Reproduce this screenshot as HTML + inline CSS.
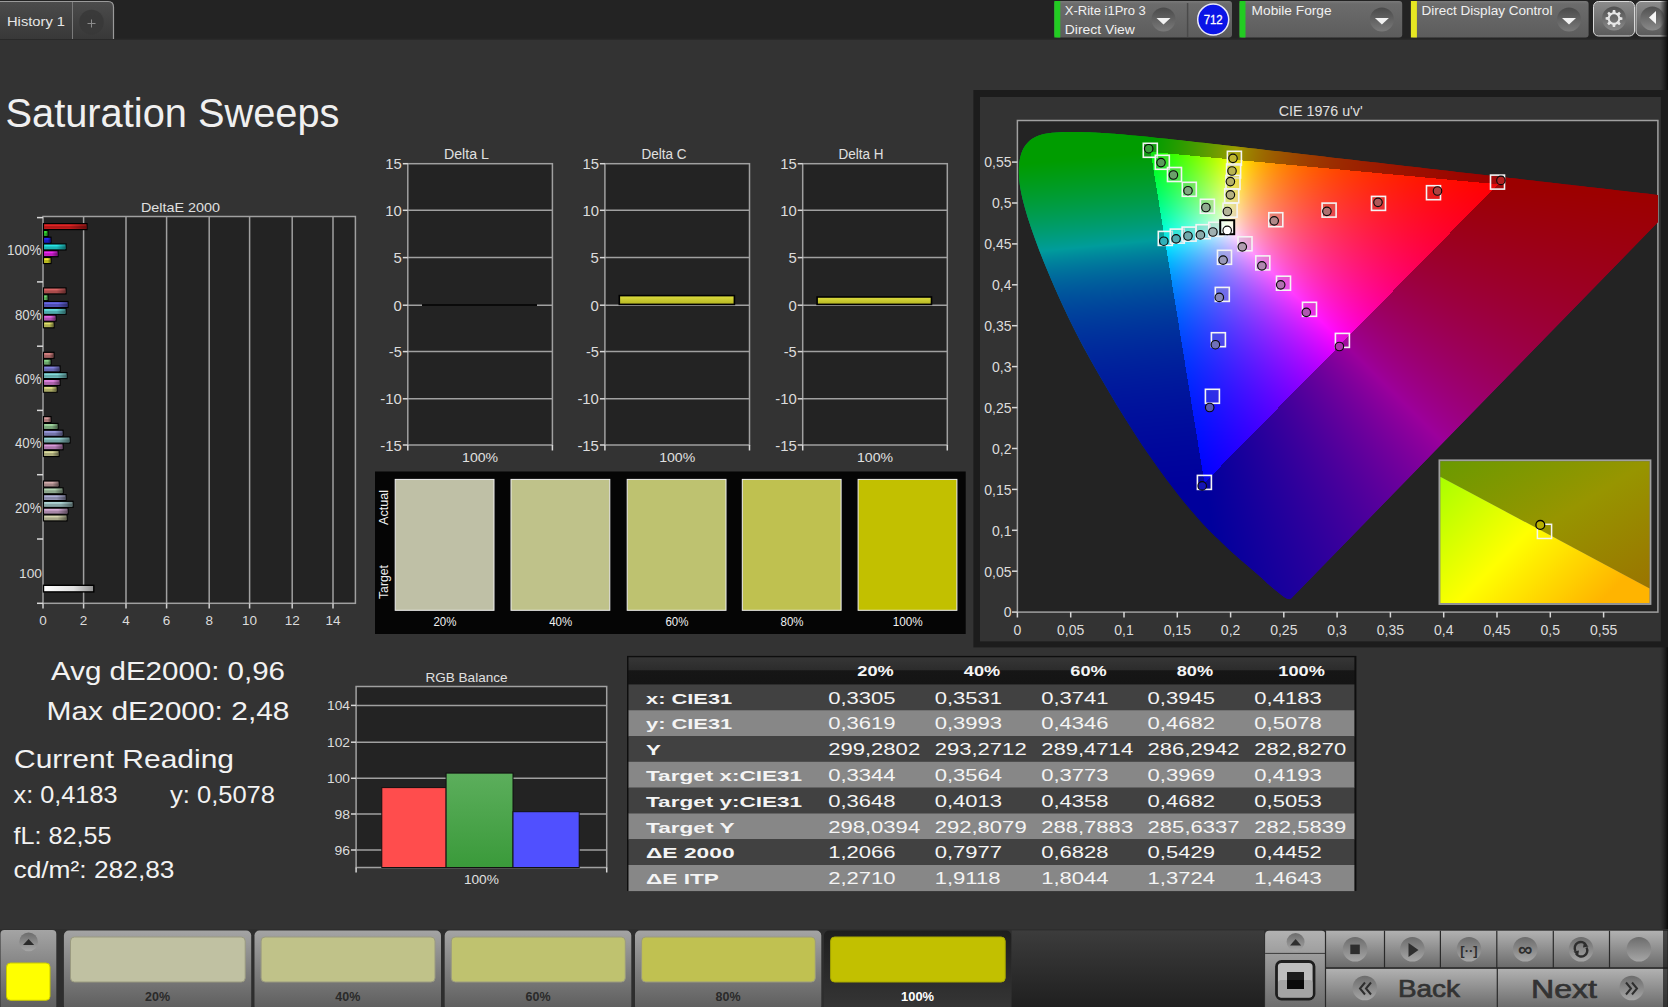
<!DOCTYPE html>
<html><head><meta charset="utf-8"><title>Saturation Sweeps</title>
<style>
html,body{margin:0;padding:0;width:1668px;height:1007px;overflow:hidden;background:#333333;}
body{position:relative;font-family:"Liberation Sans",sans-serif;}
svg text{font-family:"Liberation Sans",sans-serif;}
#cie{position:absolute;left:1018px;top:121px;width:640px;height:491px;}
#ov{position:absolute;left:0;top:0;}
#bg{position:absolute;left:0;top:0;}
</style></head><body>
<svg id="bg" width="1668" height="1007"><defs>
<linearGradient id="tabg" x1="0" y1="0" x2="0" y2="1"><stop offset="0" stop-color="#4c4c4c"/><stop offset="1" stop-color="#383838"/></linearGradient>
<linearGradient id="devg" x1="0" y1="0" x2="0" y2="1"><stop offset="0" stop-color="#7a7a7a"/><stop offset="0.08" stop-color="#6c6c6c"/><stop offset="1" stop-color="#5c5c5c"/></linearGradient>
<linearGradient id="btng" x1="0" y1="0" x2="0" y2="1"><stop offset="0" stop-color="#909090"/><stop offset="1" stop-color="#4e4e4e"/></linearGradient>
<linearGradient id="knob" x1="0" y1="0" x2="0" y2="1"><stop offset="0" stop-color="#4a4a4a"/><stop offset="1" stop-color="#7a7a7a"/></linearGradient>
<linearGradient id="knob2" x1="0" y1="0" x2="0" y2="1"><stop offset="0" stop-color="#6c6c6c"/><stop offset="1" stop-color="#a6a6a6"/></linearGradient>
<linearGradient id="tileg" x1="0" y1="0" x2="0" y2="1"><stop offset="0" stop-color="#a4a4a4"/><stop offset="0.55" stop-color="#7c7c7c"/><stop offset="1" stop-color="#5c5c5c"/></linearGradient>
<linearGradient id="tilesel" x1="0" y1="0" x2="0" y2="1"><stop offset="0" stop-color="#1e1e1e"/><stop offset="1" stop-color="#363636"/></linearGradient>
<linearGradient id="ctrlg" x1="0" y1="0" x2="0" y2="1"><stop offset="0" stop-color="#b2b2b2"/><stop offset="1" stop-color="#6a6a6a"/></linearGradient>
<linearGradient id="darkp" x1="0" y1="0" x2="0" y2="1"><stop offset="0" stop-color="#3c3c3c"/><stop offset="1" stop-color="#1e1e1e"/></linearGradient>
<linearGradient id="whitebar" x1="0" y1="0" x2="1" y2="0"><stop offset="0" stop-color="#ffffff"/><stop offset="0.6" stop-color="#e0e0e0"/><stop offset="1" stop-color="#909090"/></linearGradient>
<linearGradient id="ybar" x1="0" y1="0" x2="0" y2="1"><stop offset="0" stop-color="#dede40"/><stop offset="1" stop-color="#b4b420"/></linearGradient>
<linearGradient id="gbar" x1="0" y1="0" x2="0" y2="1"><stop offset="0" stop-color="#5cae5c"/><stop offset="1" stop-color="#3a9a3a"/></linearGradient>
<linearGradient id="hdrg" x1="0" y1="0" x2="0" y2="1"><stop offset="0" stop-color="#363636"/><stop offset="0.45" stop-color="#2c2c2c"/><stop offset="0.5" stop-color="#161616"/><stop offset="1" stop-color="#141414"/></linearGradient>
<linearGradient id="redge" x1="0" y1="0" x2="1" y2="0"><stop offset="0" stop-color="#1c1c1c" stop-opacity="0"/><stop offset="1" stop-color="#0a0a0a"/></linearGradient>
<linearGradient id="barshade" x1="0" y1="0" x2="1" y2="0"><stop offset="0" stop-color="#000" stop-opacity="0"/><stop offset="0.6" stop-color="#000" stop-opacity="0"/><stop offset="1" stop-color="#000" stop-opacity="0.4"/></linearGradient>
</defs>
<rect x="0" y="0" width="1668" height="40" fill="#232323"/>
<rect x="0" y="38.5" width="1668" height="1.5" fill="#292929"/>
<path d="M0,39 L0,1 L108,1 Q114,1 114,7 L114,39 Z" fill="url(#tabg)"/>
<path d="M0,1.5 L108,1.5 Q113.5,1.5 113.5,7 L113.5,39" fill="none" stroke="#9a9a9a" stroke-width="1.2"/>
<line x1="72.5" y1="2" x2="72.5" y2="39" stroke="#7a7a7a" stroke-width="1"/>
<circle cx="91.5" cy="22" r="12.3" fill="#383838" opacity="0.9"/>
<path d="M87.5,23.5 H95.5 M91.5,19.5 V27.5" stroke="#8c8c8c" stroke-width="1"/>
<text x="7" y="25.8" font-size="13.5" fill="#e6e6e6" text-anchor="start" textLength="58" lengthAdjust="spacingAndGlyphs" >History 1</text>
<rect x="1054.3" y="1" width="177.70000000000005" height="36.5" rx="3" fill="url(#devg)"/>
<rect x="1054.3" y="1" width="6" height="36.5" fill="#22cc22"/>
<line x1="1187.6" y1="3" x2="1187.6" y2="37" stroke="#4a4a4a" stroke-width="1.5"/>
<text x="1064.8" y="15" font-size="13" fill="#f0f0f0" text-anchor="start" textLength="81" lengthAdjust="spacingAndGlyphs" >X-Rite i1Pro 3</text>
<text x="1064.8" y="34" font-size="13" fill="#f0f0f0" text-anchor="start" textLength="70" lengthAdjust="spacingAndGlyphs" >Direct View</text>
<circle cx="1163.5" cy="19.6" r="12" fill="url(#knob)"/>
<path d="M1156.5,18.1 L1170.5,18.1 L1163.5,24.6 Z" fill="#f2f2f2"/>
<circle cx="1213.2" cy="19.6" r="15.5" fill="#0a14e6" stroke="#e8e8f8" stroke-width="1.5"/>
<text x="1213.2" y="24.2" font-size="12.5" fill="#ffffff" text-anchor="middle" textLength="19" lengthAdjust="spacingAndGlyphs" stroke="#ffffff" stroke-width="0.3">712</text>
<rect x="1239.5" y="1" width="162.70000000000005" height="36.5" rx="3" fill="url(#devg)"/>
<rect x="1239.5" y="1" width="6" height="36.5" fill="#22cc22"/>
<text x="1251.6" y="15" font-size="13" fill="#f0f0f0" text-anchor="start" textLength="80" lengthAdjust="spacingAndGlyphs" >Mobile Forge</text>
<circle cx="1381.9" cy="19.6" r="12" fill="url(#knob)"/>
<path d="M1374.9,18.1 L1388.9,18.1 L1381.9,24.6 Z" fill="#f2f2f2"/>
<rect x="1410.9" y="1" width="177.69999999999982" height="36.5" rx="3" fill="url(#devg)"/>
<rect x="1410.9" y="1" width="6" height="36.5" fill="#e6e622"/>
<text x="1421.4" y="15" font-size="13" fill="#f0f0f0" text-anchor="start" textLength="131" lengthAdjust="spacingAndGlyphs" >Direct Display Control</text>
<circle cx="1569" cy="19.6" r="12" fill="url(#knob)"/>
<path d="M1562,18.1 L1576,18.1 L1569,24.6 Z" fill="#f2f2f2"/>
<linearGradient id="gbtn" x1="0" y1="0" x2="0" y2="1"><stop offset="0" stop-color="#8c8c8c"/><stop offset="1" stop-color="#5a5a5a"/></linearGradient>
<linearGradient id="gknob" x1="0" y1="0" x2="0" y2="1"><stop offset="0" stop-color="#505050"/><stop offset="1" stop-color="#8a8a8a"/></linearGradient>
<rect x="1593.5" y="1.5" width="41" height="34.5" rx="5" fill="url(#gbtn)" stroke="#d8d8d8" stroke-width="1"/>
<circle cx="1614" cy="18.5" r="12" fill="url(#gknob)"/>
<path d="M1612.9,10.1 L1615.2,10.1 L1615.8,13.5 L1612.2,13.5 Z" fill="#e6e6e6" transform="rotate(0 1614 18.5)"/><path d="M1612.9,10.1 L1615.2,10.1 L1615.8,13.5 L1612.2,13.5 Z" fill="#e6e6e6" transform="rotate(45 1614 18.5)"/><path d="M1612.9,10.1 L1615.2,10.1 L1615.8,13.5 L1612.2,13.5 Z" fill="#e6e6e6" transform="rotate(90 1614 18.5)"/><path d="M1612.9,10.1 L1615.2,10.1 L1615.8,13.5 L1612.2,13.5 Z" fill="#e6e6e6" transform="rotate(135 1614 18.5)"/><path d="M1612.9,10.1 L1615.2,10.1 L1615.8,13.5 L1612.2,13.5 Z" fill="#e6e6e6" transform="rotate(180 1614 18.5)"/><path d="M1612.9,10.1 L1615.2,10.1 L1615.8,13.5 L1612.2,13.5 Z" fill="#e6e6e6" transform="rotate(225 1614 18.5)"/><path d="M1612.9,10.1 L1615.2,10.1 L1615.8,13.5 L1612.2,13.5 Z" fill="#e6e6e6" transform="rotate(270 1614 18.5)"/><path d="M1612.9,10.1 L1615.2,10.1 L1615.8,13.5 L1612.2,13.5 Z" fill="#e6e6e6" transform="rotate(315 1614 18.5)"/>
<circle cx="1614" cy="18.5" r="5.3" fill="none" stroke="#e6e6e6" stroke-width="2"/>
<rect x="1636" y="1.5" width="40" height="34.5" rx="5" fill="url(#gbtn)" stroke="#d8d8d8" stroke-width="1"/>
<circle cx="1652.3" cy="18.5" r="12" fill="url(#gknob)"/>
<path d="M1649,17.5 L1656,11 L1656,24 Z" fill="#f6f6f6"/>
<rect x="1660" y="0" width="8" height="1007" fill="url(#redge)"/>
<text x="5.5" y="126.9" font-size="40" fill="#f0f0f0" text-anchor="start" textLength="334" lengthAdjust="spacingAndGlyphs" >Saturation Sweeps</text>
<rect x="43" y="216.5" width="312.4" height="386.8" fill="#232323" stroke="#a0a0a0" stroke-width="1.5"/>
<line x1="83.6" y1="216.5" x2="83.6" y2="603.3" stroke="#a0a0a0" stroke-width="1.5"/>
<line x1="126.0" y1="216.5" x2="126.0" y2="603.3" stroke="#a0a0a0" stroke-width="1.5"/>
<line x1="166.6" y1="216.5" x2="166.6" y2="603.3" stroke="#a0a0a0" stroke-width="1.5"/>
<line x1="209.2" y1="216.5" x2="209.2" y2="603.3" stroke="#a0a0a0" stroke-width="1.5"/>
<line x1="249.6" y1="216.5" x2="249.6" y2="603.3" stroke="#a0a0a0" stroke-width="1.5"/>
<line x1="292.2" y1="216.5" x2="292.2" y2="603.3" stroke="#a0a0a0" stroke-width="1.5"/>
<line x1="333.0" y1="216.5" x2="333.0" y2="603.3" stroke="#a0a0a0" stroke-width="1.5"/>
<line x1="43.0" y1="603.3" x2="43.0" y2="608.5" stroke="#d0d0d0" stroke-width="1.5"/>
<text x="43.0" y="625" font-size="13.5" fill="#dcdcdc" text-anchor="middle" >0</text>
<line x1="83.6" y1="603.3" x2="83.6" y2="608.5" stroke="#d0d0d0" stroke-width="1.5"/>
<text x="83.6" y="625" font-size="13.5" fill="#dcdcdc" text-anchor="middle" >2</text>
<line x1="126.0" y1="603.3" x2="126.0" y2="608.5" stroke="#d0d0d0" stroke-width="1.5"/>
<text x="126.0" y="625" font-size="13.5" fill="#dcdcdc" text-anchor="middle" >4</text>
<line x1="166.6" y1="603.3" x2="166.6" y2="608.5" stroke="#d0d0d0" stroke-width="1.5"/>
<text x="166.6" y="625" font-size="13.5" fill="#dcdcdc" text-anchor="middle" >6</text>
<line x1="209.2" y1="603.3" x2="209.2" y2="608.5" stroke="#d0d0d0" stroke-width="1.5"/>
<text x="209.2" y="625" font-size="13.5" fill="#dcdcdc" text-anchor="middle" >8</text>
<line x1="249.6" y1="603.3" x2="249.6" y2="608.5" stroke="#d0d0d0" stroke-width="1.5"/>
<text x="249.6" y="625" font-size="13.5" fill="#dcdcdc" text-anchor="middle" >10</text>
<line x1="292.2" y1="603.3" x2="292.2" y2="608.5" stroke="#d0d0d0" stroke-width="1.5"/>
<text x="292.2" y="625" font-size="13.5" fill="#dcdcdc" text-anchor="middle" >12</text>
<line x1="333.0" y1="603.3" x2="333.0" y2="608.5" stroke="#d0d0d0" stroke-width="1.5"/>
<text x="333.0" y="625" font-size="13.5" fill="#dcdcdc" text-anchor="middle" >14</text>
<line x1="37" y1="217.6" x2="43" y2="217.6" stroke="#d8d8d8" stroke-width="1.5"/>
<line x1="37" y1="281.9" x2="43" y2="281.9" stroke="#d8d8d8" stroke-width="1.5"/>
<line x1="37" y1="346.2" x2="43" y2="346.2" stroke="#d8d8d8" stroke-width="1.5"/>
<line x1="37" y1="410.4" x2="43" y2="410.4" stroke="#d8d8d8" stroke-width="1.5"/>
<line x1="37" y1="474.7" x2="43" y2="474.7" stroke="#d8d8d8" stroke-width="1.5"/>
<line x1="37" y1="539.0" x2="43" y2="539.0" stroke="#d8d8d8" stroke-width="1.5"/>
<line x1="37" y1="603.3" x2="43" y2="603.3" stroke="#d8d8d8" stroke-width="1.5"/>
<text x="180.4" y="212.2" font-size="13.5" fill="#e0e0e0" text-anchor="middle" textLength="79" lengthAdjust="spacingAndGlyphs" >DeltaE 2000</text>
<text x="41.5" y="255.4" font-size="14" fill="#dcdcdc" text-anchor="end" textLength="34.5" lengthAdjust="spacingAndGlyphs" >100%</text>
<text x="41.5" y="319.7" font-size="14" fill="#dcdcdc" text-anchor="end" textLength="26.5" lengthAdjust="spacingAndGlyphs" >80%</text>
<text x="41.5" y="384.0" font-size="14" fill="#dcdcdc" text-anchor="end" textLength="26.5" lengthAdjust="spacingAndGlyphs" >60%</text>
<text x="41.5" y="448.29999999999995" font-size="14" fill="#dcdcdc" text-anchor="end" textLength="26.5" lengthAdjust="spacingAndGlyphs" >40%</text>
<text x="41.5" y="512.6" font-size="14" fill="#dcdcdc" text-anchor="end" textLength="26.5" lengthAdjust="spacingAndGlyphs" >20%</text>
<text x="42" y="578" font-size="13" fill="#dcdcdc" text-anchor="end" textLength="23" lengthAdjust="spacingAndGlyphs" >100</text>
<rect x="43.5" y="223.6" width="43.5" height="6" fill="rgb(224, 36, 36)" stroke="#000" stroke-width="1.2"/>
<rect x="44.2" y="226.1" width="42.0" height="2.6" fill="rgb(142, 16, 16)" opacity="0.6"/>
<rect x="44.2" y="224.2" width="42.0" height="4.8" fill="url(#barshade)"/>
<rect x="43.5" y="230.4" width="4.5" height="6" fill="rgb(56, 224, 56)" stroke="#000" stroke-width="1.2"/>
<rect x="44.2" y="232.9" width="3.0" height="2.6" fill="rgb(30, 142, 30)" opacity="0.6"/>
<rect x="44.2" y="231.0" width="3.0" height="4.8" fill="url(#barshade)"/>
<rect x="43.5" y="237.2" width="7.5" height="6" fill="rgb(40, 40, 241)" stroke="#000" stroke-width="1.2"/>
<rect x="44.2" y="239.7" width="6.0" height="2.6" fill="rgb(18, 18, 153)" opacity="0.6"/>
<rect x="44.2" y="237.8" width="6.0" height="4.8" fill="url(#barshade)"/>
<rect x="43.5" y="243.9" width="22.5" height="6" fill="rgb(40, 230, 230)" stroke="#000" stroke-width="1.2"/>
<rect x="44.2" y="246.4" width="21.0" height="2.6" fill="rgb(18, 146, 146)" opacity="0.6"/>
<rect x="44.2" y="244.5" width="21.0" height="4.8" fill="url(#barshade)"/>
<rect x="43.5" y="250.7" width="14.5" height="6" fill="rgb(241, 40, 241)" stroke="#000" stroke-width="1.2"/>
<rect x="44.2" y="253.2" width="13.0" height="2.6" fill="rgb(153, 18, 153)" opacity="0.6"/>
<rect x="44.2" y="251.3" width="13.0" height="4.8" fill="url(#barshade)"/>
<rect x="43.5" y="257.5" width="7.5" height="6" fill="rgb(236, 236, 45)" stroke="#000" stroke-width="1.2"/>
<rect x="44.2" y="260.0" width="6.0" height="2.6" fill="rgb(150, 150, 22)" opacity="0.6"/>
<rect x="44.2" y="258.1" width="6.0" height="4.8" fill="url(#barshade)"/>
<rect x="43.5" y="287.9" width="22.5" height="6" fill="rgb(218, 101, 101)" stroke="#000" stroke-width="1.2"/>
<rect x="44.2" y="290.4" width="21.0" height="2.6" fill="rgb(138, 60, 60)" opacity="0.6"/>
<rect x="44.2" y="288.6" width="21.0" height="4.8" fill="url(#barshade)"/>
<rect x="43.5" y="294.7" width="4.5" height="6" fill="rgb(113, 218, 113)" stroke="#000" stroke-width="1.2"/>
<rect x="44.2" y="297.2" width="3.0" height="2.6" fill="rgb(68, 138, 68)" opacity="0.6"/>
<rect x="44.2" y="295.3" width="3.0" height="4.8" fill="url(#barshade)"/>
<rect x="43.5" y="301.5" width="24.5" height="6" fill="rgb(103, 103, 228)" stroke="#000" stroke-width="1.2"/>
<rect x="44.2" y="304.0" width="23.0" height="2.6" fill="rgb(61, 61, 144)" opacity="0.6"/>
<rect x="44.2" y="302.1" width="23.0" height="4.8" fill="url(#barshade)"/>
<rect x="43.5" y="308.3" width="22.5" height="6" fill="rgb(103, 221, 221)" stroke="#000" stroke-width="1.2"/>
<rect x="44.2" y="310.8" width="21.0" height="2.6" fill="rgb(61, 140, 140)" opacity="0.6"/>
<rect x="44.2" y="308.9" width="21.0" height="4.8" fill="url(#barshade)"/>
<rect x="43.5" y="315.1" width="12.5" height="6" fill="rgb(228, 103, 228)" stroke="#000" stroke-width="1.2"/>
<rect x="44.2" y="317.6" width="11.0" height="2.6" fill="rgb(144, 61, 144)" opacity="0.6"/>
<rect x="44.2" y="315.7" width="11.0" height="4.8" fill="url(#barshade)"/>
<rect x="43.5" y="321.8" width="10.5" height="6" fill="rgb(224, 224, 107)" stroke="#000" stroke-width="1.2"/>
<rect x="44.2" y="324.3" width="9.0" height="2.6" fill="rgb(142, 142, 63)" opacity="0.6"/>
<rect x="44.2" y="322.4" width="9.0" height="4.8" fill="url(#barshade)"/>
<rect x="43.5" y="352.3" width="10.5" height="6" fill="rgb(214, 130, 130)" stroke="#000" stroke-width="1.2"/>
<rect x="44.2" y="354.8" width="9.0" height="2.6" fill="rgb(135, 79, 79)" opacity="0.6"/>
<rect x="44.2" y="352.9" width="9.0" height="4.8" fill="url(#barshade)"/>
<rect x="43.5" y="359.1" width="7.5" height="6" fill="rgb(139, 214, 139)" stroke="#000" stroke-width="1.2"/>
<rect x="44.2" y="361.6" width="6.0" height="2.6" fill="rgb(85, 135, 85)" opacity="0.6"/>
<rect x="44.2" y="359.7" width="6.0" height="4.8" fill="url(#barshade)"/>
<rect x="43.5" y="365.9" width="16.5" height="6" fill="rgb(131, 131, 222)" stroke="#000" stroke-width="1.2"/>
<rect x="44.2" y="368.4" width="15.0" height="2.6" fill="rgb(80, 80, 141)" opacity="0.6"/>
<rect x="44.2" y="366.5" width="15.0" height="4.8" fill="url(#barshade)"/>
<rect x="43.5" y="372.6" width="23.5" height="6" fill="rgb(131, 218, 218)" stroke="#000" stroke-width="1.2"/>
<rect x="44.2" y="375.1" width="22.0" height="2.6" fill="rgb(80, 138, 138)" opacity="0.6"/>
<rect x="44.2" y="373.2" width="22.0" height="4.8" fill="url(#barshade)"/>
<rect x="43.5" y="379.4" width="16.5" height="6" fill="rgb(222, 131, 222)" stroke="#000" stroke-width="1.2"/>
<rect x="44.2" y="381.9" width="15.0" height="2.6" fill="rgb(141, 80, 141)" opacity="0.6"/>
<rect x="44.2" y="380.0" width="15.0" height="4.8" fill="url(#barshade)"/>
<rect x="43.5" y="386.2" width="13.5" height="6" fill="rgb(220, 220, 134)" stroke="#000" stroke-width="1.2"/>
<rect x="44.2" y="388.7" width="12.0" height="2.6" fill="rgb(139, 139, 81)" opacity="0.6"/>
<rect x="44.2" y="386.8" width="12.0" height="4.8" fill="url(#barshade)"/>
<rect x="43.5" y="416.6" width="7.5" height="6" fill="rgb(212, 153, 153)" stroke="#000" stroke-width="1.2"/>
<rect x="44.2" y="419.1" width="6.0" height="2.6" fill="rgb(134, 94, 94)" opacity="0.6"/>
<rect x="44.2" y="417.2" width="6.0" height="4.8" fill="url(#barshade)"/>
<rect x="43.5" y="423.4" width="14.5" height="6" fill="rgb(158, 212, 158)" stroke="#000" stroke-width="1.2"/>
<rect x="44.2" y="425.9" width="13.0" height="2.6" fill="rgb(98, 134, 98)" opacity="0.6"/>
<rect x="44.2" y="424.0" width="13.0" height="4.8" fill="url(#barshade)"/>
<rect x="43.5" y="430.2" width="19.5" height="6" fill="rgb(153, 153, 218)" stroke="#000" stroke-width="1.2"/>
<rect x="44.2" y="432.7" width="18.0" height="2.6" fill="rgb(94, 94, 138)" opacity="0.6"/>
<rect x="44.2" y="430.8" width="18.0" height="4.8" fill="url(#barshade)"/>
<rect x="43.5" y="437.0" width="26.5" height="6" fill="rgb(153, 214, 214)" stroke="#000" stroke-width="1.2"/>
<rect x="44.2" y="439.5" width="25.0" height="2.6" fill="rgb(94, 135, 135)" opacity="0.6"/>
<rect x="44.2" y="437.6" width="25.0" height="4.8" fill="url(#barshade)"/>
<rect x="43.5" y="443.8" width="19.5" height="6" fill="rgb(218, 153, 218)" stroke="#000" stroke-width="1.2"/>
<rect x="44.2" y="446.3" width="18.0" height="2.6" fill="rgb(138, 94, 138)" opacity="0.6"/>
<rect x="44.2" y="444.4" width="18.0" height="4.8" fill="url(#barshade)"/>
<rect x="43.5" y="450.5" width="15.5" height="6" fill="rgb(216, 216, 155)" stroke="#000" stroke-width="1.2"/>
<rect x="44.2" y="453.0" width="14.0" height="2.6" fill="rgb(137, 137, 96)" opacity="0.6"/>
<rect x="44.2" y="451.1" width="14.0" height="4.8" fill="url(#barshade)"/>
<rect x="43.5" y="481.0" width="15.5" height="6" fill="rgb(211, 173, 173)" stroke="#000" stroke-width="1.2"/>
<rect x="44.2" y="483.5" width="14.0" height="2.6" fill="rgb(133, 108, 108)" opacity="0.6"/>
<rect x="44.2" y="481.6" width="14.0" height="4.8" fill="url(#barshade)"/>
<rect x="43.5" y="487.8" width="19.5" height="6" fill="rgb(177, 211, 177)" stroke="#000" stroke-width="1.2"/>
<rect x="44.2" y="490.3" width="18.0" height="2.6" fill="rgb(111, 133, 111)" opacity="0.6"/>
<rect x="44.2" y="488.4" width="18.0" height="4.8" fill="url(#barshade)"/>
<rect x="43.5" y="494.6" width="22.5" height="6" fill="rgb(174, 174, 214)" stroke="#000" stroke-width="1.2"/>
<rect x="44.2" y="497.1" width="21.0" height="2.6" fill="rgb(108, 108, 135)" opacity="0.6"/>
<rect x="44.2" y="495.2" width="21.0" height="4.8" fill="url(#barshade)"/>
<rect x="43.5" y="501.3" width="29.5" height="6" fill="rgb(174, 212, 212)" stroke="#000" stroke-width="1.2"/>
<rect x="44.2" y="503.8" width="28.0" height="2.6" fill="rgb(108, 134, 134)" opacity="0.6"/>
<rect x="44.2" y="501.9" width="28.0" height="4.8" fill="url(#barshade)"/>
<rect x="43.5" y="508.1" width="24.5" height="6" fill="rgb(214, 174, 214)" stroke="#000" stroke-width="1.2"/>
<rect x="44.2" y="510.6" width="23.0" height="2.6" fill="rgb(135, 108, 135)" opacity="0.6"/>
<rect x="44.2" y="508.7" width="23.0" height="4.8" fill="url(#barshade)"/>
<rect x="43.5" y="514.9" width="23.5" height="6" fill="rgb(213, 213, 175)" stroke="#000" stroke-width="1.2"/>
<rect x="44.2" y="517.4" width="22.0" height="2.6" fill="rgb(135, 135, 109)" opacity="0.6"/>
<rect x="44.2" y="515.5" width="22.0" height="4.8" fill="url(#barshade)"/>
<rect x="43.5" y="585.3" width="50.3" height="6.6" fill="url(#whitebar)" stroke="#000" stroke-width="1.4"/>
<rect x="407.8" y="163.7" width="144.6" height="281.3" fill="#232323" stroke="#a0a0a0" stroke-width="1.5"/>
<line x1="402.8" y1="163.7" x2="407.8" y2="163.7" stroke="#d8d8d8" stroke-width="1.5"/>
<text x="401.8" y="169.3" font-size="14" fill="#dcdcdc" text-anchor="end" textLength="16.5" lengthAdjust="spacingAndGlyphs" >15</text>
<line x1="407.8" y1="210.3" x2="552.4" y2="210.3" stroke="#a0a0a0" stroke-width="1.5"/>
<line x1="402.8" y1="210.3" x2="407.8" y2="210.3" stroke="#d8d8d8" stroke-width="1.5"/>
<text x="401.8" y="215.9" font-size="14" fill="#dcdcdc" text-anchor="end" textLength="16.5" lengthAdjust="spacingAndGlyphs" >10</text>
<line x1="407.8" y1="257.6" x2="552.4" y2="257.6" stroke="#a0a0a0" stroke-width="1.5"/>
<line x1="402.8" y1="257.6" x2="407.8" y2="257.6" stroke="#d8d8d8" stroke-width="1.5"/>
<text x="401.8" y="263.2" font-size="14" fill="#dcdcdc" text-anchor="end" textLength="8.3" lengthAdjust="spacingAndGlyphs" >5</text>
<line x1="407.8" y1="305.2" x2="552.4" y2="305.2" stroke="#a0a0a0" stroke-width="1.5"/>
<line x1="402.8" y1="305.2" x2="407.8" y2="305.2" stroke="#d8d8d8" stroke-width="1.5"/>
<text x="401.8" y="310.8" font-size="14" fill="#dcdcdc" text-anchor="end" textLength="8.3" lengthAdjust="spacingAndGlyphs" >0</text>
<line x1="407.8" y1="351.6" x2="552.4" y2="351.6" stroke="#a0a0a0" stroke-width="1.5"/>
<line x1="402.8" y1="351.6" x2="407.8" y2="351.6" stroke="#d8d8d8" stroke-width="1.5"/>
<text x="401.8" y="357.2" font-size="14" fill="#dcdcdc" text-anchor="end" textLength="13" lengthAdjust="spacingAndGlyphs" >-5</text>
<line x1="407.8" y1="398.8" x2="552.4" y2="398.8" stroke="#a0a0a0" stroke-width="1.5"/>
<line x1="402.8" y1="398.8" x2="407.8" y2="398.8" stroke="#d8d8d8" stroke-width="1.5"/>
<text x="401.8" y="404.4" font-size="14" fill="#dcdcdc" text-anchor="end" textLength="21.5" lengthAdjust="spacingAndGlyphs" >-10</text>
<line x1="402.8" y1="445.0" x2="407.8" y2="445.0" stroke="#d8d8d8" stroke-width="1.5"/>
<text x="401.8" y="450.6" font-size="14" fill="#dcdcdc" text-anchor="end" textLength="21.5" lengthAdjust="spacingAndGlyphs" >-15</text>
<line x1="407.8" y1="445" x2="407.8" y2="450.5" stroke="#d8d8d8" stroke-width="1.5"/>
<line x1="552.4" y1="445" x2="552.4" y2="450.5" stroke="#d8d8d8" stroke-width="1.5"/>
<text x="466.4" y="158.6" font-size="14" fill="#e0e0e0" text-anchor="middle" textLength="45" lengthAdjust="spacingAndGlyphs" >Delta L</text>
<text x="480.1" y="462.3" font-size="13.5" fill="#e0e0e0" text-anchor="middle" textLength="36" lengthAdjust="spacingAndGlyphs" >100%</text>
<rect x="604.9" y="163.7" width="144.6" height="281.3" fill="#232323" stroke="#a0a0a0" stroke-width="1.5"/>
<line x1="599.9" y1="163.7" x2="604.9" y2="163.7" stroke="#d8d8d8" stroke-width="1.5"/>
<text x="598.9" y="169.3" font-size="14" fill="#dcdcdc" text-anchor="end" textLength="16.5" lengthAdjust="spacingAndGlyphs" >15</text>
<line x1="604.9" y1="210.3" x2="749.5" y2="210.3" stroke="#a0a0a0" stroke-width="1.5"/>
<line x1="599.9" y1="210.3" x2="604.9" y2="210.3" stroke="#d8d8d8" stroke-width="1.5"/>
<text x="598.9" y="215.9" font-size="14" fill="#dcdcdc" text-anchor="end" textLength="16.5" lengthAdjust="spacingAndGlyphs" >10</text>
<line x1="604.9" y1="257.6" x2="749.5" y2="257.6" stroke="#a0a0a0" stroke-width="1.5"/>
<line x1="599.9" y1="257.6" x2="604.9" y2="257.6" stroke="#d8d8d8" stroke-width="1.5"/>
<text x="598.9" y="263.2" font-size="14" fill="#dcdcdc" text-anchor="end" textLength="8.3" lengthAdjust="spacingAndGlyphs" >5</text>
<line x1="604.9" y1="305.2" x2="749.5" y2="305.2" stroke="#a0a0a0" stroke-width="1.5"/>
<line x1="599.9" y1="305.2" x2="604.9" y2="305.2" stroke="#d8d8d8" stroke-width="1.5"/>
<text x="598.9" y="310.8" font-size="14" fill="#dcdcdc" text-anchor="end" textLength="8.3" lengthAdjust="spacingAndGlyphs" >0</text>
<line x1="604.9" y1="351.6" x2="749.5" y2="351.6" stroke="#a0a0a0" stroke-width="1.5"/>
<line x1="599.9" y1="351.6" x2="604.9" y2="351.6" stroke="#d8d8d8" stroke-width="1.5"/>
<text x="598.9" y="357.2" font-size="14" fill="#dcdcdc" text-anchor="end" textLength="13" lengthAdjust="spacingAndGlyphs" >-5</text>
<line x1="604.9" y1="398.8" x2="749.5" y2="398.8" stroke="#a0a0a0" stroke-width="1.5"/>
<line x1="599.9" y1="398.8" x2="604.9" y2="398.8" stroke="#d8d8d8" stroke-width="1.5"/>
<text x="598.9" y="404.4" font-size="14" fill="#dcdcdc" text-anchor="end" textLength="21.5" lengthAdjust="spacingAndGlyphs" >-10</text>
<line x1="599.9" y1="445.0" x2="604.9" y2="445.0" stroke="#d8d8d8" stroke-width="1.5"/>
<text x="598.9" y="450.6" font-size="14" fill="#dcdcdc" text-anchor="end" textLength="21.5" lengthAdjust="spacingAndGlyphs" >-15</text>
<line x1="604.9" y1="445" x2="604.9" y2="450.5" stroke="#d8d8d8" stroke-width="1.5"/>
<line x1="749.5" y1="445" x2="749.5" y2="450.5" stroke="#d8d8d8" stroke-width="1.5"/>
<text x="663.9" y="158.6" font-size="14" fill="#e0e0e0" text-anchor="middle" textLength="45" lengthAdjust="spacingAndGlyphs" >Delta C</text>
<text x="677.2" y="462.3" font-size="13.5" fill="#e0e0e0" text-anchor="middle" textLength="36" lengthAdjust="spacingAndGlyphs" >100%</text>
<rect x="802.7" y="163.7" width="144.6" height="281.3" fill="#232323" stroke="#a0a0a0" stroke-width="1.5"/>
<line x1="797.7" y1="163.7" x2="802.7" y2="163.7" stroke="#d8d8d8" stroke-width="1.5"/>
<text x="796.7" y="169.3" font-size="14" fill="#dcdcdc" text-anchor="end" textLength="16.5" lengthAdjust="spacingAndGlyphs" >15</text>
<line x1="802.7" y1="210.3" x2="947.3" y2="210.3" stroke="#a0a0a0" stroke-width="1.5"/>
<line x1="797.7" y1="210.3" x2="802.7" y2="210.3" stroke="#d8d8d8" stroke-width="1.5"/>
<text x="796.7" y="215.9" font-size="14" fill="#dcdcdc" text-anchor="end" textLength="16.5" lengthAdjust="spacingAndGlyphs" >10</text>
<line x1="802.7" y1="257.6" x2="947.3" y2="257.6" stroke="#a0a0a0" stroke-width="1.5"/>
<line x1="797.7" y1="257.6" x2="802.7" y2="257.6" stroke="#d8d8d8" stroke-width="1.5"/>
<text x="796.7" y="263.2" font-size="14" fill="#dcdcdc" text-anchor="end" textLength="8.3" lengthAdjust="spacingAndGlyphs" >5</text>
<line x1="802.7" y1="305.2" x2="947.3" y2="305.2" stroke="#a0a0a0" stroke-width="1.5"/>
<line x1="797.7" y1="305.2" x2="802.7" y2="305.2" stroke="#d8d8d8" stroke-width="1.5"/>
<text x="796.7" y="310.8" font-size="14" fill="#dcdcdc" text-anchor="end" textLength="8.3" lengthAdjust="spacingAndGlyphs" >0</text>
<line x1="802.7" y1="351.6" x2="947.3" y2="351.6" stroke="#a0a0a0" stroke-width="1.5"/>
<line x1="797.7" y1="351.6" x2="802.7" y2="351.6" stroke="#d8d8d8" stroke-width="1.5"/>
<text x="796.7" y="357.2" font-size="14" fill="#dcdcdc" text-anchor="end" textLength="13" lengthAdjust="spacingAndGlyphs" >-5</text>
<line x1="802.7" y1="398.8" x2="947.3" y2="398.8" stroke="#a0a0a0" stroke-width="1.5"/>
<line x1="797.7" y1="398.8" x2="802.7" y2="398.8" stroke="#d8d8d8" stroke-width="1.5"/>
<text x="796.7" y="404.4" font-size="14" fill="#dcdcdc" text-anchor="end" textLength="21.5" lengthAdjust="spacingAndGlyphs" >-10</text>
<line x1="797.7" y1="445.0" x2="802.7" y2="445.0" stroke="#d8d8d8" stroke-width="1.5"/>
<text x="796.7" y="450.6" font-size="14" fill="#dcdcdc" text-anchor="end" textLength="21.5" lengthAdjust="spacingAndGlyphs" >-15</text>
<line x1="802.7" y1="445" x2="802.7" y2="450.5" stroke="#d8d8d8" stroke-width="1.5"/>
<line x1="947.3" y1="445" x2="947.3" y2="450.5" stroke="#d8d8d8" stroke-width="1.5"/>
<text x="861" y="158.6" font-size="14" fill="#e0e0e0" text-anchor="middle" textLength="45" lengthAdjust="spacingAndGlyphs" >Delta H</text>
<text x="875.0" y="462.3" font-size="13.5" fill="#e0e0e0" text-anchor="middle" textLength="36" lengthAdjust="spacingAndGlyphs" >100%</text>
<line x1="422" y1="305" x2="537" y2="305" stroke="#0a0a0a" stroke-width="2"/>
<rect x="619.3" y="295.6" width="115.1" height="8.8" fill="url(#ybar)" stroke="#000" stroke-width="1.6"/>
<rect x="817.1" y="297" width="114.4" height="7.4" fill="url(#ybar)" stroke="#000" stroke-width="1.6"/>
<rect x="375" y="471.5" width="590.7" height="162.5" fill="#050505"/>
<rect x="395.2" y="479.4" width="98.8" height="130.9" fill="#bfc0a6" stroke="#f0f0f0" stroke-width="1"/>
<text x="444.9" y="626.2" font-size="12.5" fill="#f0f0f0" text-anchor="middle" textLength="23" lengthAdjust="spacingAndGlyphs" >20%</text>
<rect x="511" y="479.4" width="98.8" height="130.9" fill="#bfc28a" stroke="#f0f0f0" stroke-width="1"/>
<text x="560.7" y="626.2" font-size="12.5" fill="#f0f0f0" text-anchor="middle" textLength="23" lengthAdjust="spacingAndGlyphs" >40%</text>
<rect x="627.2" y="479.4" width="98.8" height="130.9" fill="#bec270" stroke="#f0f0f0" stroke-width="1"/>
<text x="676.9" y="626.2" font-size="12.5" fill="#f0f0f0" text-anchor="middle" textLength="23" lengthAdjust="spacingAndGlyphs" >60%</text>
<rect x="742.3" y="479.4" width="98.8" height="130.9" fill="#bfc150" stroke="#f0f0f0" stroke-width="1"/>
<text x="792.0" y="626.2" font-size="12.5" fill="#f0f0f0" text-anchor="middle" textLength="23" lengthAdjust="spacingAndGlyphs" >80%</text>
<rect x="858.1" y="479.4" width="98.8" height="130.9" fill="#c2c000" stroke="#f0f0f0" stroke-width="1"/>
<text x="907.8" y="626.2" font-size="12.5" fill="#f0f0f0" text-anchor="middle" textLength="30" lengthAdjust="spacingAndGlyphs" >100%</text>
<text x="0" y="0" font-size="13" fill="#f0f0f0" text-anchor="middle" textLength="35" lengthAdjust="spacingAndGlyphs" transform="translate(388.3,507.4) rotate(-90)">Actual</text>
<text x="0" y="0" font-size="13" fill="#f0f0f0" text-anchor="middle" textLength="34" lengthAdjust="spacingAndGlyphs" transform="translate(388.3,582) rotate(-90)">Target</text>
<text x="51" y="679.5" font-size="26.5" fill="#f2f2f2" text-anchor="start" textLength="234" lengthAdjust="spacingAndGlyphs" >Avg dE2000: 0,96</text>
<text x="46.5" y="720.2" font-size="26.5" fill="#f2f2f2" text-anchor="start" textLength="243" lengthAdjust="spacingAndGlyphs" >Max dE2000: 2,48</text>
<text x="14" y="768.2" font-size="26.5" fill="#f2f2f2" text-anchor="start" textLength="220" lengthAdjust="spacingAndGlyphs" >Current Reading</text>
<text x="13.5" y="803.4" font-size="23.6" fill="#f2f2f2" text-anchor="start" textLength="104" lengthAdjust="spacingAndGlyphs" >x: 0,4183</text>
<text x="170" y="803.4" font-size="23.6" fill="#f2f2f2" text-anchor="start" textLength="105" lengthAdjust="spacingAndGlyphs" >y: 0,5078</text>
<text x="13.5" y="844.2" font-size="23.6" fill="#f2f2f2" text-anchor="start" textLength="98" lengthAdjust="spacingAndGlyphs" >fL: 82,55</text>
<text x="13.5" y="878.4" font-size="23.6" fill="#f2f2f2" text-anchor="start" textLength="161" lengthAdjust="spacingAndGlyphs" >cd/m²: 282,83</text>
<rect x="356.1" y="686.5" width="250.6" height="181" fill="#232323" stroke="#a0a0a0" stroke-width="1.5"/>
<line x1="356.1" y1="705.4" x2="606.7" y2="705.4" stroke="#a0a0a0" stroke-width="1.5"/>
<line x1="351" y1="705.4" x2="356.1" y2="705.4" stroke="#d8d8d8" stroke-width="1.5"/>
<text x="350" y="710.0" font-size="13" fill="#dcdcdc" text-anchor="end" textLength="23" lengthAdjust="spacingAndGlyphs" >104</text>
<line x1="356.1" y1="742.2" x2="606.7" y2="742.2" stroke="#a0a0a0" stroke-width="1.5"/>
<line x1="351" y1="742.2" x2="356.1" y2="742.2" stroke="#d8d8d8" stroke-width="1.5"/>
<text x="350" y="746.8000000000001" font-size="13" fill="#dcdcdc" text-anchor="end" textLength="23" lengthAdjust="spacingAndGlyphs" >102</text>
<line x1="356.1" y1="778.3" x2="606.7" y2="778.3" stroke="#a0a0a0" stroke-width="1.5"/>
<line x1="351" y1="778.3" x2="356.1" y2="778.3" stroke="#d8d8d8" stroke-width="1.5"/>
<text x="350" y="782.9" font-size="13" fill="#dcdcdc" text-anchor="end" textLength="23" lengthAdjust="spacingAndGlyphs" >100</text>
<line x1="356.1" y1="814" x2="606.7" y2="814" stroke="#a0a0a0" stroke-width="1.5"/>
<line x1="351" y1="814" x2="356.1" y2="814" stroke="#d8d8d8" stroke-width="1.5"/>
<text x="350" y="818.6" font-size="13" fill="#dcdcdc" text-anchor="end" textLength="15.5" lengthAdjust="spacingAndGlyphs" >98</text>
<line x1="356.1" y1="850" x2="606.7" y2="850" stroke="#a0a0a0" stroke-width="1.5"/>
<line x1="351" y1="850" x2="356.1" y2="850" stroke="#d8d8d8" stroke-width="1.5"/>
<text x="350" y="854.6" font-size="13" fill="#dcdcdc" text-anchor="end" textLength="15.5" lengthAdjust="spacingAndGlyphs" >96</text>
<text x="466.5" y="681.6" font-size="13.5" fill="#e0e0e0" text-anchor="middle" textLength="82" lengthAdjust="spacingAndGlyphs" >RGB Balance</text>
<rect x="381.8" y="787.6" width="64.3" height="79.9" fill="#ff4d4d" stroke="#111" stroke-width="1"/>
<rect x="446.1" y="773.1" width="66.9" height="94.4" fill="url(#gbar)" stroke="#111" stroke-width="1"/>
<rect x="513" y="811.7" width="66.2" height="55.8" fill="#5050ff" stroke="#111" stroke-width="1"/>
<rect x="356.1" y="867.5" width="250.6" height="0" stroke="#a0a0a0" stroke-width="1.5"/>
<line x1="356.1" y1="867.5" x2="356.1" y2="872.5" stroke="#d8d8d8" stroke-width="1.5"/>
<line x1="606.7" y1="867.5" x2="606.7" y2="872.5" stroke="#d8d8d8" stroke-width="1.5"/>
<text x="481.4" y="883.5" font-size="13.5" fill="#e0e0e0" text-anchor="middle" textLength="35" lengthAdjust="spacingAndGlyphs" >100%</text>
<rect x="627" y="655.9" width="729.4" height="235" fill="#0e0e0e"/>
<rect x="628.5" y="657.3" width="725.9" height="27.1" fill="url(#hdrg)"/>
<rect x="628.5" y="684.4" width="725.9" height="26.1" fill="#414141"/>
<g transform="translate(646,703.6) scale(1.42,1)"><text x="0" y="0" font-size="15.4" font-weight="bold" fill="#f4f4f4">x: CIE31</text></g>
<g transform="translate(828.2,703.6) scale(1.345,1)"><text x="0" y="0" font-size="16.4" fill="#f4f4f4">0,3305</text></g>
<g transform="translate(934.7,703.6) scale(1.345,1)"><text x="0" y="0" font-size="16.4" fill="#f4f4f4">0,3531</text></g>
<g transform="translate(1041.2,703.6) scale(1.345,1)"><text x="0" y="0" font-size="16.4" fill="#f4f4f4">0,3741</text></g>
<g transform="translate(1147.6000000000001,703.6) scale(1.345,1)"><text x="0" y="0" font-size="16.4" fill="#f4f4f4">0,3945</text></g>
<g transform="translate(1254.3,703.6) scale(1.345,1)"><text x="0" y="0" font-size="16.4" fill="#f4f4f4">0,4183</text></g>
<rect x="628.5" y="710.2" width="725.9" height="26.1" fill="#878787"/>
<g transform="translate(646,729.4) scale(1.42,1)"><text x="0" y="0" font-size="15.4" font-weight="bold" fill="#f4f4f4">y: CIE31</text></g>
<g transform="translate(828.2,729.4) scale(1.345,1)"><text x="0" y="0" font-size="16.4" fill="#f4f4f4">0,3619</text></g>
<g transform="translate(934.7,729.4) scale(1.345,1)"><text x="0" y="0" font-size="16.4" fill="#f4f4f4">0,3993</text></g>
<g transform="translate(1041.2,729.4) scale(1.345,1)"><text x="0" y="0" font-size="16.4" fill="#f4f4f4">0,4346</text></g>
<g transform="translate(1147.6000000000001,729.4) scale(1.345,1)"><text x="0" y="0" font-size="16.4" fill="#f4f4f4">0,4682</text></g>
<g transform="translate(1254.3,729.4) scale(1.345,1)"><text x="0" y="0" font-size="16.4" fill="#f4f4f4">0,5078</text></g>
<rect x="628.5" y="736.0" width="725.9" height="26.1" fill="#414141"/>
<g transform="translate(646,755.2) scale(1.45,1)"><text x="0" y="0" font-size="15.4" font-weight="bold" fill="#f4f4f4">Y</text></g>
<g transform="translate(828.2,755.2) scale(1.345,1)"><text x="0" y="0" font-size="16.4" fill="#f4f4f4">299,2802</text></g>
<g transform="translate(934.7,755.2) scale(1.345,1)"><text x="0" y="0" font-size="16.4" fill="#f4f4f4">293,2712</text></g>
<g transform="translate(1041.2,755.2) scale(1.345,1)"><text x="0" y="0" font-size="16.4" fill="#f4f4f4">289,4714</text></g>
<g transform="translate(1147.6000000000001,755.2) scale(1.345,1)"><text x="0" y="0" font-size="16.4" fill="#f4f4f4">286,2942</text></g>
<g transform="translate(1254.3,755.2) scale(1.345,1)"><text x="0" y="0" font-size="16.4" fill="#f4f4f4">282,8270</text></g>
<rect x="628.5" y="761.8" width="725.9" height="26.1" fill="#878787"/>
<g transform="translate(646,781.0) scale(1.465,1)"><text x="0" y="0" font-size="15.4" font-weight="bold" fill="#f4f4f4">Target x:CIE31</text></g>
<g transform="translate(828.2,781.0) scale(1.345,1)"><text x="0" y="0" font-size="16.4" fill="#f4f4f4">0,3344</text></g>
<g transform="translate(934.7,781.0) scale(1.345,1)"><text x="0" y="0" font-size="16.4" fill="#f4f4f4">0,3564</text></g>
<g transform="translate(1041.2,781.0) scale(1.345,1)"><text x="0" y="0" font-size="16.4" fill="#f4f4f4">0,3773</text></g>
<g transform="translate(1147.6000000000001,781.0) scale(1.345,1)"><text x="0" y="0" font-size="16.4" fill="#f4f4f4">0,3969</text></g>
<g transform="translate(1254.3,781.0) scale(1.345,1)"><text x="0" y="0" font-size="16.4" fill="#f4f4f4">0,4193</text></g>
<rect x="628.5" y="787.6" width="725.9" height="26.1" fill="#414141"/>
<g transform="translate(646,806.8) scale(1.465,1)"><text x="0" y="0" font-size="15.4" font-weight="bold" fill="#f4f4f4">Target y:CIE31</text></g>
<g transform="translate(828.2,806.8) scale(1.345,1)"><text x="0" y="0" font-size="16.4" fill="#f4f4f4">0,3648</text></g>
<g transform="translate(934.7,806.8) scale(1.345,1)"><text x="0" y="0" font-size="16.4" fill="#f4f4f4">0,4013</text></g>
<g transform="translate(1041.2,806.8) scale(1.345,1)"><text x="0" y="0" font-size="16.4" fill="#f4f4f4">0,4358</text></g>
<g transform="translate(1147.6000000000001,806.8) scale(1.345,1)"><text x="0" y="0" font-size="16.4" fill="#f4f4f4">0,4682</text></g>
<g transform="translate(1254.3,806.8) scale(1.345,1)"><text x="0" y="0" font-size="16.4" fill="#f4f4f4">0,5053</text></g>
<rect x="628.5" y="813.4" width="725.9" height="26.1" fill="#878787"/>
<g transform="translate(646,832.6) scale(1.47,1)"><text x="0" y="0" font-size="15.4" font-weight="bold" fill="#f4f4f4">Target Y</text></g>
<g transform="translate(828.2,832.6) scale(1.345,1)"><text x="0" y="0" font-size="16.4" fill="#f4f4f4">298,0394</text></g>
<g transform="translate(934.7,832.6) scale(1.345,1)"><text x="0" y="0" font-size="16.4" fill="#f4f4f4">292,8079</text></g>
<g transform="translate(1041.2,832.6) scale(1.345,1)"><text x="0" y="0" font-size="16.4" fill="#f4f4f4">288,7883</text></g>
<g transform="translate(1147.6000000000001,832.6) scale(1.345,1)"><text x="0" y="0" font-size="16.4" fill="#f4f4f4">285,6337</text></g>
<g transform="translate(1254.3,832.6) scale(1.345,1)"><text x="0" y="0" font-size="16.4" fill="#f4f4f4">282,5839</text></g>
<rect x="628.5" y="839.2" width="725.9" height="26.1" fill="#414141"/>
<g transform="translate(646,858.4) scale(1.48,1)"><text x="0" y="0" font-size="15.4" font-weight="bold" fill="#f4f4f4">ΔE 2000</text></g>
<g transform="translate(828.2,858.4) scale(1.345,1)"><text x="0" y="0" font-size="16.4" fill="#f4f4f4">1,2066</text></g>
<g transform="translate(934.7,858.4) scale(1.345,1)"><text x="0" y="0" font-size="16.4" fill="#f4f4f4">0,7977</text></g>
<g transform="translate(1041.2,858.4) scale(1.345,1)"><text x="0" y="0" font-size="16.4" fill="#f4f4f4">0,6828</text></g>
<g transform="translate(1147.6000000000001,858.4) scale(1.345,1)"><text x="0" y="0" font-size="16.4" fill="#f4f4f4">0,5429</text></g>
<g transform="translate(1254.3,858.4) scale(1.345,1)"><text x="0" y="0" font-size="16.4" fill="#f4f4f4">0,4452</text></g>
<rect x="628.5" y="865.0" width="725.9" height="26.1" fill="#878787"/>
<g transform="translate(646,884.2) scale(1.47,1)"><text x="0" y="0" font-size="15.4" font-weight="bold" fill="#f4f4f4">ΔE ITP</text></g>
<g transform="translate(828.2,884.2) scale(1.345,1)"><text x="0" y="0" font-size="16.4" fill="#f4f4f4">2,2710</text></g>
<g transform="translate(934.7,884.2) scale(1.345,1)"><text x="0" y="0" font-size="16.4" fill="#f4f4f4">1,9118</text></g>
<g transform="translate(1041.2,884.2) scale(1.345,1)"><text x="0" y="0" font-size="16.4" fill="#f4f4f4">1,8044</text></g>
<g transform="translate(1147.6000000000001,884.2) scale(1.345,1)"><text x="0" y="0" font-size="16.4" fill="#f4f4f4">1,3724</text></g>
<g transform="translate(1254.3,884.2) scale(1.345,1)"><text x="0" y="0" font-size="16.4" fill="#f4f4f4">1,4643</text></g>
<g transform="translate(875.5,676) scale(1.3,1)"><text x="0" y="0" font-size="14" font-weight="bold" fill="#f4f4f4" text-anchor="middle">20%</text></g>
<g transform="translate(982.0,676) scale(1.3,1)"><text x="0" y="0" font-size="14" font-weight="bold" fill="#f4f4f4" text-anchor="middle">40%</text></g>
<g transform="translate(1088.5,676) scale(1.3,1)"><text x="0" y="0" font-size="14" font-weight="bold" fill="#f4f4f4" text-anchor="middle">60%</text></g>
<g transform="translate(1194.9,676) scale(1.3,1)"><text x="0" y="0" font-size="14" font-weight="bold" fill="#f4f4f4" text-anchor="middle">80%</text></g>
<g transform="translate(1301.6,676) scale(1.3,1)"><text x="0" y="0" font-size="14" font-weight="bold" fill="#f4f4f4" text-anchor="middle">100%</text></g>
<rect x="0" y="929" width="1668" height="78" fill="#2e2e2e"/>
<rect x="0.5" y="930" width="55.8" height="80" rx="4" fill="url(#tileg)"/>
<circle cx="28.6" cy="941.9" r="9.4" fill="url(#knob2)"/>
<path d="M23,945 L28.6,939 L34.2,945 Z" fill="#2a2a2a"/>
<rect x="6.5" y="963" width="43.5" height="37.3" rx="4" fill="#ffff00" stroke="#c8c800" stroke-width="1"/>
<rect x="63.9" y="930.5" width="187.3" height="80" rx="5" fill="url(#tileg)"/>
<rect x="70.5" y="937" width="174.7" height="45" rx="4" fill="#c0c1a2" stroke="#9a9a80" stroke-width="1"/>
<text x="157.5" y="1000.5" font-size="13" fill="#2a2a2a" text-anchor="middle" font-weight="bold" textLength="25" lengthAdjust="spacingAndGlyphs" >20%</text>
<rect x="254.5" y="930.5" width="186.5" height="80" rx="5" fill="url(#tileg)"/>
<rect x="261.1" y="937" width="173.9" height="45" rx="4" fill="#c0c289" stroke="#9a9a80" stroke-width="1"/>
<text x="347.8" y="1000.5" font-size="13" fill="#2a2a2a" text-anchor="middle" font-weight="bold" textLength="25" lengthAdjust="spacingAndGlyphs" >40%</text>
<rect x="444.7" y="930.5" width="186.6" height="80" rx="5" fill="url(#tileg)"/>
<rect x="451.3" y="937" width="174.0" height="45" rx="4" fill="#bfc26f" stroke="#9a9a80" stroke-width="1"/>
<text x="538.0" y="1000.5" font-size="13" fill="#2a2a2a" text-anchor="middle" font-weight="bold" textLength="25" lengthAdjust="spacingAndGlyphs" >60%</text>
<rect x="635" y="930.5" width="186.3" height="80" rx="5" fill="url(#tileg)"/>
<rect x="641.6" y="937" width="173.7" height="45" rx="4" fill="#c0c151" stroke="#9a9a80" stroke-width="1"/>
<text x="728.1" y="1000.5" font-size="13" fill="#2a2a2a" text-anchor="middle" font-weight="bold" textLength="25" lengthAdjust="spacingAndGlyphs" >80%</text>
<rect x="824" y="930.5" width="187.2" height="80" rx="5" fill="url(#tilesel)"/>
<rect x="830.6" y="937" width="174.6" height="45" rx="4" fill="#c2c000" stroke="#a8a800" stroke-width="1"/>
<text x="917.6" y="1000.5" font-size="13" fill="#ffffff" text-anchor="middle" font-weight="bold" textLength="33" lengthAdjust="spacingAndGlyphs" >100%</text>
<rect x="1011.7" y="930.5" width="252.5" height="80" fill="url(#darkp)"/>
<rect x="1265.1" y="930.7" width="60.4" height="80" rx="4" fill="url(#ctrlg)"/>
<line x1="1265.1" y1="953.4" x2="1325.5" y2="953.4" stroke="#3a3a3a" stroke-width="1"/>
<circle cx="1295.6" cy="942" r="9" fill="url(#knob2)"/>
<path d="M1290,945.5 L1295.6,939 L1301.2,945.5 Z" fill="#2e2e2e"/>
<rect x="1276.5" y="961.5" width="37.5" height="37.5" rx="5" fill="#bdbdbd" stroke="#1e1e1e" stroke-width="2.8"/>
<rect x="1278" y="980" width="34.5" height="17.5" rx="3" fill="#a4a4a4"/>
<rect x="1287" y="972" width="17" height="17" fill="#0a0a0a"/>
<rect x="1287" y="972" width="17" height="8" fill="#1c1c1c"/>
<rect x="1325.5" y="930.7" width="342" height="37.1" fill="url(#ctrlg)"/>
<rect x="1325.5" y="968.5" width="342" height="40" fill="url(#ctrlg)"/>
<line x1="1325.5" y1="968" x2="1668" y2="968" stroke="#2a2a2a" stroke-width="1.4"/>
<line x1="1384.5" y1="930.7" x2="1384.5" y2="968" stroke="#2a2a2a" stroke-width="1.2"/>
<line x1="1440.4" y1="930.7" x2="1440.4" y2="968" stroke="#2a2a2a" stroke-width="1.2"/>
<line x1="1496.8" y1="930.7" x2="1496.8" y2="968" stroke="#2a2a2a" stroke-width="1.2"/>
<line x1="1553.3" y1="930.7" x2="1553.3" y2="968" stroke="#2a2a2a" stroke-width="1.2"/>
<line x1="1609.5" y1="930.7" x2="1609.5" y2="968" stroke="#2a2a2a" stroke-width="1.2"/>
<line x1="1497.3" y1="968" x2="1497.3" y2="1007" stroke="#2a2a2a" stroke-width="1.2"/>
<line x1="1325.5" y1="930.7" x2="1325.5" y2="1007" stroke="#2a2a2a" stroke-width="1.2"/>
<circle cx="1355.1" cy="949.2" r="12.3" fill="url(#knob2)"/>
<circle cx="1412.4" cy="949.2" r="12.3" fill="url(#knob2)"/>
<circle cx="1469" cy="949.2" r="12.3" fill="url(#knob2)"/>
<circle cx="1525.2" cy="949.2" r="12.3" fill="url(#knob2)"/>
<circle cx="1581.1" cy="949.2" r="12.3" fill="url(#knob2)"/>
<circle cx="1638.9" cy="949.2" r="12.3" fill="url(#knob2)"/>
<circle cx="1364.8" cy="988" r="12.3" fill="url(#knob2)"/>
<circle cx="1631.7" cy="988" r="12.3" fill="url(#knob2)"/>
<rect x="1350.3" y="944.6" width="9.5" height="9.5" fill="#2e2e2e"/>
<path d="M1408.5,943 L1418.5,950 L1408.5,957 Z" fill="#2e2e2e"/>
<text x="1469" y="954.5" font-size="13" font-weight="bold" fill="#2e2e2e" text-anchor="middle">[··]</text>
<text x="1525.2" y="956" font-size="20" font-weight="bold" fill="#2e2e2e" text-anchor="middle">∞</text>
<path d="M1575.5,951 A6,6 0 0 1 1586,945 M1586.5,947.5 A6,6 0 0 1 1576,953.5" fill="none" stroke="#2e2e2e" stroke-width="2.4"/>
<path d="M1584,942 L1588.5,946.5 L1583,947.5 Z M1578,956 L1573.5,951.5 L1579,950.5 Z" fill="#2e2e2e"/>
<path d="M1365,982.5 L1360,988.5 L1365,994.5 M1371,982.5 L1366,988.5 L1371,994.5" fill="none" stroke="#2e2e2e" stroke-width="2"/>
<path d="M1626,982.5 L1631,988.5 L1626,994.5 M1632,982.5 L1637,988.5 L1632,994.5" fill="none" stroke="#2e2e2e" stroke-width="2"/>
<text x="1398" y="996.5" font-size="24.5" fill="#333333" text-anchor="start" textLength="62" lengthAdjust="spacingAndGlyphs" stroke="#333333" stroke-width="0.7">Back</text>
<text x="1531" y="997.5" font-size="25.5" fill="#333333" text-anchor="start" textLength="66" lengthAdjust="spacingAndGlyphs" stroke="#333333" stroke-width="0.7">Next</text>
<rect x="1663" y="930" width="5" height="77" fill="#1a1a1a" opacity="0.7"/>
<rect x="973.4" y="90" width="695" height="557.4" fill="#1c1c1c"/>
<rect x="980" y="97" width="680.8" height="544.4" fill="#333333"/>
<rect x="1017.4" y="120.5" width="640.5" height="491.6" fill="#232323" stroke="#a0a0a0" stroke-width="1.5"/>
<text x="1320.7" y="115.5" font-size="14" fill="#e0e0e0" text-anchor="middle" textLength="84" lengthAdjust="spacingAndGlyphs" >CIE 1976 u'v'</text>
<line x1="1012" y1="612.1" x2="1017.4" y2="612.1" stroke="#d8d8d8" stroke-width="1.5"/>
<text x="1011.5" y="617.4" font-size="14" fill="#dcdcdc" text-anchor="end" >0</text>
<line x1="1017.4" y1="612.1" x2="1017.4" y2="617.5" stroke="#d8d8d8" stroke-width="1.5"/>
<text x="1017.4" y="634.5" font-size="14" fill="#dcdcdc" text-anchor="middle" >0</text>
<line x1="1012" y1="571.2" x2="1017.4" y2="571.2" stroke="#d8d8d8" stroke-width="1.5"/>
<text x="1011.5" y="576.5" font-size="14" fill="#dcdcdc" text-anchor="end" >0,05</text>
<line x1="1070.7" y1="612.1" x2="1070.7" y2="617.5" stroke="#d8d8d8" stroke-width="1.5"/>
<text x="1070.7" y="634.5" font-size="14" fill="#dcdcdc" text-anchor="middle" >0,05</text>
<line x1="1012" y1="530.3" x2="1017.4" y2="530.3" stroke="#d8d8d8" stroke-width="1.5"/>
<text x="1011.5" y="535.6" font-size="14" fill="#dcdcdc" text-anchor="end" >0,1</text>
<line x1="1124.0" y1="612.1" x2="1124.0" y2="617.5" stroke="#d8d8d8" stroke-width="1.5"/>
<text x="1124.0" y="634.5" font-size="14" fill="#dcdcdc" text-anchor="middle" >0,1</text>
<line x1="1012" y1="489.4" x2="1017.4" y2="489.4" stroke="#d8d8d8" stroke-width="1.5"/>
<text x="1011.5" y="494.7" font-size="14" fill="#dcdcdc" text-anchor="end" >0,15</text>
<line x1="1177.3" y1="612.1" x2="1177.3" y2="617.5" stroke="#d8d8d8" stroke-width="1.5"/>
<text x="1177.3" y="634.5" font-size="14" fill="#dcdcdc" text-anchor="middle" >0,15</text>
<line x1="1012" y1="448.5" x2="1017.4" y2="448.5" stroke="#d8d8d8" stroke-width="1.5"/>
<text x="1011.5" y="453.8" font-size="14" fill="#dcdcdc" text-anchor="end" >0,2</text>
<line x1="1230.6" y1="612.1" x2="1230.6" y2="617.5" stroke="#d8d8d8" stroke-width="1.5"/>
<text x="1230.6" y="634.5" font-size="14" fill="#dcdcdc" text-anchor="middle" >0,2</text>
<line x1="1012" y1="407.6" x2="1017.4" y2="407.6" stroke="#d8d8d8" stroke-width="1.5"/>
<text x="1011.5" y="412.9" font-size="14" fill="#dcdcdc" text-anchor="end" >0,25</text>
<line x1="1283.8" y1="612.1" x2="1283.8" y2="617.5" stroke="#d8d8d8" stroke-width="1.5"/>
<text x="1283.8" y="634.5" font-size="14" fill="#dcdcdc" text-anchor="middle" >0,25</text>
<line x1="1012" y1="366.6" x2="1017.4" y2="366.6" stroke="#d8d8d8" stroke-width="1.5"/>
<text x="1011.5" y="371.9" font-size="14" fill="#dcdcdc" text-anchor="end" >0,3</text>
<line x1="1337.1" y1="612.1" x2="1337.1" y2="617.5" stroke="#d8d8d8" stroke-width="1.5"/>
<text x="1337.1" y="634.5" font-size="14" fill="#dcdcdc" text-anchor="middle" >0,3</text>
<line x1="1012" y1="325.7" x2="1017.4" y2="325.7" stroke="#d8d8d8" stroke-width="1.5"/>
<text x="1011.5" y="331.0" font-size="14" fill="#dcdcdc" text-anchor="end" >0,35</text>
<line x1="1390.4" y1="612.1" x2="1390.4" y2="617.5" stroke="#d8d8d8" stroke-width="1.5"/>
<text x="1390.4" y="634.5" font-size="14" fill="#dcdcdc" text-anchor="middle" >0,35</text>
<line x1="1012" y1="284.8" x2="1017.4" y2="284.8" stroke="#d8d8d8" stroke-width="1.5"/>
<text x="1011.5" y="290.1" font-size="14" fill="#dcdcdc" text-anchor="end" >0,4</text>
<line x1="1443.7" y1="612.1" x2="1443.7" y2="617.5" stroke="#d8d8d8" stroke-width="1.5"/>
<text x="1443.7" y="634.5" font-size="14" fill="#dcdcdc" text-anchor="middle" >0,4</text>
<line x1="1012" y1="243.9" x2="1017.4" y2="243.9" stroke="#d8d8d8" stroke-width="1.5"/>
<text x="1011.5" y="249.2" font-size="14" fill="#dcdcdc" text-anchor="end" >0,45</text>
<line x1="1497.0" y1="612.1" x2="1497.0" y2="617.5" stroke="#d8d8d8" stroke-width="1.5"/>
<text x="1497.0" y="634.5" font-size="14" fill="#dcdcdc" text-anchor="middle" >0,45</text>
<line x1="1012" y1="203.0" x2="1017.4" y2="203.0" stroke="#d8d8d8" stroke-width="1.5"/>
<text x="1011.5" y="208.3" font-size="14" fill="#dcdcdc" text-anchor="end" >0,5</text>
<line x1="1550.3" y1="612.1" x2="1550.3" y2="617.5" stroke="#d8d8d8" stroke-width="1.5"/>
<text x="1550.3" y="634.5" font-size="14" fill="#dcdcdc" text-anchor="middle" >0,5</text>
<line x1="1012" y1="162.1" x2="1017.4" y2="162.1" stroke="#d8d8d8" stroke-width="1.5"/>
<text x="1011.5" y="167.4" font-size="14" fill="#dcdcdc" text-anchor="end" >0,55</text>
<line x1="1603.6" y1="612.1" x2="1603.6" y2="617.5" stroke="#d8d8d8" stroke-width="1.5"/>
<text x="1603.6" y="634.5" font-size="14" fill="#dcdcdc" text-anchor="middle" >0,55</text></svg>
<div style="position:absolute;left:1018px;top:121px;width:640px;height:491px;clip-path:path('M273.1,477.5 L273.0,477.6 L272.9,477.6 L272.8,477.7 L272.7,477.8 L272.5,477.9 L272.4,477.9 L272.2,478.0 L271.9,478.1 L271.7,478.1 L271.4,478.1 L271.1,478.1 L270.7,478.1 L270.2,478.0 L269.5,477.8 L268.9,477.6 L268.2,477.3 L267.6,476.9 L266.9,476.5 L266.2,476.0 L265.4,475.4 L264.6,474.8 L263.7,474.2 L262.8,473.4 L261.7,472.6 L260.5,471.6 L259.2,470.6 L257.8,469.5 L256.3,468.2 L254.7,466.9 L253.1,465.5 L251.3,464.0 L249.5,462.5 L247.8,460.8 L246.0,459.1 L244.1,457.3 L241.9,455.4 L239.5,453.3 L236.9,451.0 L234.1,448.6 L231.2,446.1 L228.1,443.5 L225.0,440.8 L221.7,438.0 L218.1,434.8 L214.4,431.5 L210.5,427.9 L206.4,424.0 L202.0,419.8 L197.4,415.4 L192.6,410.7 L187.5,405.5 L182.0,399.5 L175.9,392.6 L169.4,385.0 L162.6,376.6 L155.5,367.6 L148.0,357.7 L140.3,347.1 L132.3,335.8 L124.1,323.9 L115.8,311.1 L107.2,297.6 L98.6,283.7 L90.2,269.5 L81.7,255.1 L73.3,240.2 L65.1,225.4 L57.5,210.7 L50.3,196.2 L43.5,181.8 L37.2,167.7 L31.4,154.3 L26.1,141.5 L21.2,129.2 L16.9,117.5 L13.1,106.7 L9.8,96.7 L7.1,87.6 L4.8,79.1 L3.1,71.3 L1.9,64.2 L1.2,57.8 L0.9,52.0 L0.9,46.7 L1.3,41.8 L2.0,37.4 L3.0,33.4 L4.3,29.8 L6.0,26.5 L7.9,23.7 L10.1,21.2 L12.5,19.0 L15.1,17.2 L17.9,15.7 L20.9,14.5 L24.0,13.5 L27.3,12.8 L30.7,12.2 L34.2,11.8 L37.8,11.5 L41.4,11.3 L45.2,11.1 L49.0,11.1 L52.8,11.0 L56.5,11.0 L60.3,11.0 L64.1,11.1 L68.0,11.2 L71.9,11.3 L75.8,11.5 L79.8,11.7 L83.8,11.9 L88.0,12.2 L92.2,12.5 L96.5,12.8 L100.9,13.2 L105.4,13.6 L110.0,14.0 L114.7,14.4 L119.5,14.9 L124.4,15.3 L129.5,15.8 L134.6,16.4 L139.9,16.9 L145.4,17.5 L151.0,18.1 L156.7,18.7 L162.6,19.3 L168.6,20.0 L174.8,20.7 L181.1,21.4 L187.6,22.1 L194.3,22.9 L201.1,23.6 L208.1,24.4 L215.3,25.2 L222.7,26.1 L230.2,26.9 L237.9,27.8 L245.8,28.7 L253.8,29.7 L262.1,30.6 L270.5,31.6 L279.0,32.5 L287.7,33.5 L296.6,34.6 L305.7,35.6 L314.8,36.7 L324.1,37.7 L333.6,38.8 L343.1,39.9 L352.7,41.0 L362.4,42.1 L372.2,43.2 L382.0,44.4 L391.7,45.5 L401.2,46.6 L410.7,47.7 L420.1,48.7 L429.4,49.8 L438.8,50.9 L448.1,52.0 L457.2,53.0 L466.2,54.0 L474.8,55.0 L483.3,56.0 L491.5,56.9 L499.4,57.8 L507.2,58.7 L514.7,59.6 L521.9,60.4 L528.9,61.2 L535.5,62.0 L541.9,62.7 L548.0,63.4 L553.9,64.1 L559.5,64.7 L564.8,65.3 L569.9,65.9 L574.8,66.5 L579.6,67.0 L584.0,67.5 L588.3,68.0 L592.5,68.5 L596.6,69.0 L600.5,69.4 L604.2,69.9 L607.8,70.3 L611.1,70.7 L614.1,71.0 L617.2,71.4 L620.8,71.8 L625.2,72.3 L630.2,72.8 L635.2,73.4 L639.4,73.9 L642.7,74.3 L645.5,74.6 L648.0,74.9 L650.5,75.2 L653.1,75.5 L655.7,75.8 L658.1,76.0 L660.1,76.3 L661.5,76.4 L662.5,76.5 L663.3,76.6 L663.8,76.7 Z');background:conic-gradient(from 0deg at 210.2px 108px, rgb(136,153,0) 0deg, rgb(153,153,0) 5.4deg, rgb(153,0,0) 80.6deg, rgb(153,0,153) 134.7deg, rgb(0,0,153) 185.4deg, rgb(0,153,153) 260.7deg, rgb(0,153,0) 314.8deg, rgb(136,153,0) 360deg)"></div>
<div style="position:absolute;left:1018px;top:121px;width:640px;height:491px;clip-path:polygon(479.8px 63.4px,132.6px 31.0px,186.3px 361.9px);background:radial-gradient(circle at 210.2px 108px, #ffffff 0px, rgba(255,255,255,0.85) 12px, rgba(255,255,255,0) 90px),conic-gradient(from 0deg at 210.2px 108px, rgb(228,255,0) 0deg, rgb(255,255,0) 5.4deg, rgb(255,0,0) 80.6deg, rgb(255,0,255) 134.7deg, rgb(0,0,255) 185.4deg, rgb(0,255,255) 260.7deg, rgb(0,255,0) 314.8deg, rgb(228,255,0) 360deg)"></div>
<canvas id="cie" width="640" height="491"></canvas>
<svg id="ov" width="1668" height="1007"><defs>
<linearGradient id="insdark" x1="0" y1="0" x2="1" y2="1"><stop offset="0" stop-color="#6a9a00"/><stop offset="0.5" stop-color="#979500"/><stop offset="1" stop-color="#9a7400"/></linearGradient>
<linearGradient id="insbright" x1="0" y1="0" x2="1" y2="0.6"><stop offset="0" stop-color="#a8ff00"/><stop offset="0.5" stop-color="#ffff00"/><stop offset="1" stop-color="#ffb400"/></linearGradient>
<clipPath id="plotclip"><rect x="1018.2" y="121.3" width="639" height="490"/></clipPath>
</defs>
<rect x="1439.3" y="460.2" width="211.3" height="143.9" fill="#6f6f6f"/>
<path d="M1440.3,461.2 H1649.6 V588.4 L1440.3,476.7 Z" fill="url(#insdark)"/>
<path d="M1440.3,476.7 L1649.6,588.4 V603.1 H1440.3 Z" fill="url(#insbright)"/>
<rect x="1439.3" y="460.2" width="211.3" height="143.9" fill="none" stroke="#a0a0a0" stroke-width="1.6"/>
<rect x="1537.4" y="524.3" width="14.2" height="14.2" fill="none" stroke="#f4f4f4" stroke-width="1.5"/>
<circle cx="1540.3" cy="524.9" r="4.4" fill="#b8b000" stroke="#000" stroke-width="1.3"/>
<g clip-path="url(#plotclip)"><rect x="1143.3" y="143.3" width="14" height="14" fill="#3aa03a" fill-opacity="0.3" stroke="#f4f4f4" stroke-width="1.6"/><rect x="1155.3" y="155.3" width="14" height="14" fill="#5a9a5a" fill-opacity="0.3" stroke="#f4f4f4" stroke-width="1.6"/><rect x="1167.5" y="167.5" width="14" height="14" fill="#6aa06a" fill-opacity="0.3" stroke="#f4f4f4" stroke-width="1.6"/><rect x="1182.3" y="182.3" width="14" height="14" fill="#80a880" fill-opacity="0.3" stroke="#f4f4f4" stroke-width="1.6"/><rect x="1200.4" y="199.3" width="14" height="14" fill="#90ac90" fill-opacity="0.3" stroke="#f4f4f4" stroke-width="1.6"/><rect x="1227.4" y="151.3" width="14" height="14" fill="#c0b830" fill-opacity="0.3" stroke="#f4f4f4" stroke-width="1.6"/><rect x="1226.6" y="164.0" width="14" height="14" fill="#b8b450" fill-opacity="0.3" stroke="#f4f4f4" stroke-width="1.6"/><rect x="1226.0" y="175.4" width="14" height="14" fill="#b4b068" fill-opacity="0.3" stroke="#f4f4f4" stroke-width="1.6"/><rect x="1224.7" y="188.9" width="14" height="14" fill="#b4b080" fill-opacity="0.3" stroke="#f4f4f4" stroke-width="1.6"/><rect x="1223.1" y="203.2" width="14" height="14" fill="#b4b498" fill-opacity="0.3" stroke="#f4f4f4" stroke-width="1.6"/><rect x="1158.3" y="231.4" width="14" height="14" fill="#30b0b8" fill-opacity="0.3" stroke="#f4f4f4" stroke-width="1.6"/><rect x="1170.3" y="229.1" width="14" height="14" fill="#50aab0" fill-opacity="0.3" stroke="#f4f4f4" stroke-width="1.6"/><rect x="1182.1" y="227.1" width="14" height="14" fill="#70aaac" fill-opacity="0.3" stroke="#f4f4f4" stroke-width="1.6"/><rect x="1196.1" y="224.7" width="14" height="14" fill="#88aaaa" fill-opacity="0.3" stroke="#f4f4f4" stroke-width="1.6"/><rect x="1208.8" y="222.3" width="14" height="14" fill="#a0b0b0" fill-opacity="0.3" stroke="#f4f4f4" stroke-width="1.6"/><rect x="1268.8" y="212.7" width="14" height="14" fill="#b08888" fill-opacity="0.3" stroke="#f4f4f4" stroke-width="1.6"/><rect x="1322.1" y="203.1" width="14" height="14" fill="#b07070" fill-opacity="0.3" stroke="#f4f4f4" stroke-width="1.6"/><rect x="1371.5" y="196.4" width="14" height="14" fill="#b05858" fill-opacity="0.3" stroke="#f4f4f4" stroke-width="1.6"/><rect x="1426.5" y="185.7" width="14" height="14" fill="#b04040" fill-opacity="0.3" stroke="#f4f4f4" stroke-width="1.6"/><rect x="1490.5" y="175.1" width="14" height="14" fill="#b02020" fill-opacity="0.3" stroke="#f4f4f4" stroke-width="1.6"/><rect x="1238.0" y="236.8" width="14" height="14" fill="#b09cb0" fill-opacity="0.3" stroke="#f4f4f4" stroke-width="1.6"/><rect x="1255.8" y="255.9" width="14" height="14" fill="#b088b0" fill-opacity="0.3" stroke="#f4f4f4" stroke-width="1.6"/><rect x="1276.5" y="276.2" width="14" height="14" fill="#b070b0" fill-opacity="0.3" stroke="#f4f4f4" stroke-width="1.6"/><rect x="1302.5" y="302.3" width="14" height="14" fill="#b058b0" fill-opacity="0.3" stroke="#f4f4f4" stroke-width="1.6"/><rect x="1335.4" y="333.4" width="14" height="14" fill="#b030b0" fill-opacity="0.3" stroke="#f4f4f4" stroke-width="1.6"/><rect x="1217.5" y="250.3" width="14" height="14" fill="#9898b8" fill-opacity="0.3" stroke="#f4f4f4" stroke-width="1.6"/><rect x="1215.3" y="287.4" width="14" height="14" fill="#8888b8" fill-opacity="0.3" stroke="#f4f4f4" stroke-width="1.6"/><rect x="1211.4" y="332.7" width="14" height="14" fill="#7070b8" fill-opacity="0.3" stroke="#f4f4f4" stroke-width="1.6"/><rect x="1205.4" y="389.3" width="14" height="14" fill="#5a5ab0" fill-opacity="0.3" stroke="#f4f4f4" stroke-width="1.6"/><rect x="1197.4" y="475.4" width="14" height="14" fill="#1414b4" fill-opacity="0.3" stroke="#f4f4f4" stroke-width="1.6"/><rect x="1220.2" y="220.2" width="14" height="14" fill="#f4fff4" fill-opacity="0.5" stroke="#000" stroke-width="2"/><circle cx="1148.7" cy="148.7" r="4.25" fill="#3aa03a" stroke="#0a0a0a" stroke-width="1.15"/><circle cx="1161" cy="162.6" r="4.25" fill="#5a9a5a" stroke="#0a0a0a" stroke-width="1.15"/><circle cx="1173.4" cy="175" r="4.25" fill="#6aa06a" stroke="#0a0a0a" stroke-width="1.15"/><circle cx="1188" cy="190.7" r="4.25" fill="#80a880" stroke="#0a0a0a" stroke-width="1.15"/><circle cx="1205.9" cy="207.5" r="4.25" fill="#90ac90" stroke="#0a0a0a" stroke-width="1.15"/><circle cx="1233" cy="158.3" r="4.25" fill="#c0b830" stroke="#0a0a0a" stroke-width="1.15"/><circle cx="1232" cy="171" r="4.25" fill="#b8b450" stroke="#0a0a0a" stroke-width="1.15"/><circle cx="1230.4" cy="181.6" r="4.25" fill="#b4b068" stroke="#0a0a0a" stroke-width="1.15"/><circle cx="1230.4" cy="194.8" r="4.25" fill="#b4b080" stroke="#0a0a0a" stroke-width="1.15"/><circle cx="1227.4" cy="211.5" r="4.25" fill="#b4b498" stroke="#0a0a0a" stroke-width="1.15"/><circle cx="1163.8" cy="241.2" r="4.25" fill="#30b0b8" stroke="#0a0a0a" stroke-width="1.15"/><circle cx="1176.1" cy="238.8" r="4.25" fill="#50aab0" stroke="#0a0a0a" stroke-width="1.15"/><circle cx="1188" cy="236" r="4.25" fill="#70aaac" stroke="#0a0a0a" stroke-width="1.15"/><circle cx="1200.4" cy="234.9" r="4.25" fill="#88aaaa" stroke="#0a0a0a" stroke-width="1.15"/><circle cx="1212.9" cy="232" r="4.25" fill="#a0b0b0" stroke="#0a0a0a" stroke-width="1.15"/><circle cx="1274.2" cy="220.8" r="4.25" fill="#b08888" stroke="#0a0a0a" stroke-width="1.15"/><circle cx="1326.9" cy="211.3" r="4.25" fill="#b07070" stroke="#0a0a0a" stroke-width="1.15"/><circle cx="1378" cy="202.3" r="4.25" fill="#b05858" stroke="#0a0a0a" stroke-width="1.15"/><circle cx="1437.5" cy="191" r="4.25" fill="#b04040" stroke="#0a0a0a" stroke-width="1.15"/><circle cx="1500.9" cy="180.4" r="4.25" fill="#b02020" stroke="#0a0a0a" stroke-width="1.15"/><circle cx="1242.3" cy="246.8" r="4.25" fill="#b09cb0" stroke="#0a0a0a" stroke-width="1.15"/><circle cx="1261.9" cy="265.8" r="4.25" fill="#b088b0" stroke="#0a0a0a" stroke-width="1.15"/><circle cx="1280.7" cy="284.8" r="4.25" fill="#b070b0" stroke="#0a0a0a" stroke-width="1.15"/><circle cx="1306.3" cy="312.3" r="4.25" fill="#b058b0" stroke="#0a0a0a" stroke-width="1.15"/><circle cx="1339.4" cy="346.5" r="4.25" fill="#b030b0" stroke="#0a0a0a" stroke-width="1.15"/><circle cx="1223.1" cy="260.1" r="4.25" fill="#9898b8" stroke="#0a0a0a" stroke-width="1.15"/><circle cx="1219.3" cy="297.4" r="4.25" fill="#8888b8" stroke="#0a0a0a" stroke-width="1.15"/><circle cx="1215.4" cy="344.7" r="4.25" fill="#7070b8" stroke="#0a0a0a" stroke-width="1.15"/><circle cx="1209.7" cy="407.5" r="4.25" fill="#5a5ab0" stroke="#0a0a0a" stroke-width="1.15"/><circle cx="1202.2" cy="485.9" r="4.25" fill="#1414b4" stroke="#0a0a0a" stroke-width="1.15"/><circle cx="1227.2" cy="230.4" r="4.25" fill="#ffffff" stroke="#0a0a0a" stroke-width="1.15"/></g></svg>
<script>
window.CIEHY=1;
(function(){
var L=[[380,0.1741,0.0050],[390,0.1738,0.0049],[400,0.1733,0.0048],[410,0.1726,0.0048],[420,0.1714,0.0051],[425,0.1703,0.0058],[430,0.1689,0.0069],[435,0.1669,0.0086],[440,0.1644,0.0109],[445,0.1611,0.0138],[450,0.1566,0.0177],[455,0.1510,0.0227],[460,0.1440,0.0297],[465,0.1355,0.0399],[470,0.1241,0.0578],[475,0.1096,0.0868],[480,0.0913,0.1327],[485,0.0687,0.2007],[490,0.0454,0.2950],[495,0.0235,0.4127],[500,0.0082,0.5384],[505,0.0039,0.6548],[510,0.0139,0.7502],[515,0.0389,0.8120],[520,0.0743,0.8338],[525,0.1142,0.8262],[530,0.1547,0.8059],[535,0.1929,0.7816],[540,0.2296,0.7543],[545,0.2658,0.7243],[550,0.3016,0.6923],[555,0.3373,0.6589],[560,0.3731,0.6245],[565,0.4087,0.5896],[570,0.4441,0.5547],[575,0.4788,0.5202],[580,0.5125,0.4866],[585,0.5448,0.4544],[590,0.5752,0.4242],[595,0.6029,0.3965],[600,0.6270,0.3725],[605,0.6482,0.3514],[610,0.6658,0.3340],[615,0.6801,0.3197],[620,0.6915,0.3083],[625,0.7006,0.2993],[630,0.7079,0.2920],[635,0.7140,0.2859],[640,0.7190,0.2809],[650,0.7260,0.2740],[660,0.7300,0.2700],[680,0.7334,0.2666],[700,0.7347,0.2653]];
var OX=1018,OY=121,W=640,H=491;
function uv2px(u,v){return [1017.4+u*1065.8-OX, 612.1-v*818.2-OY];}
var P=[];
var ADJ={445:1,450:1.5,455:2,460:2.5,465:2.5,470:2.5,475:2.5,480:2.5,485:2.5,490:2,495:1};
for(var i=0;i<L.length;i++){var x=L[i][1],y=L[i][2],d=-2*x+12*y+3;var q=uv2px(4*x/d,9*y/d);q[0]+=(ADJ[L[i][0]]||0);P.push(q);}
// catmull-rom smoothing
var pts=[];
for(var i=0;i<P.length-1;i++){
  var p0=P[Math.max(i-1,0)],p1=P[i],p2=P[i+1],p3=P[Math.min(i+2,P.length-1)];
  for(var s=0;s<8;s++){var t=s/8,t2=t*t,t3=t2*t;
    pts.push([0.5*((2*p1[0])+(-p0[0]+p2[0])*t+(2*p0[0]-5*p1[0]+4*p2[0]-p3[0])*t2+(-p0[0]+3*p1[0]-3*p2[0]+p3[0])*t3),
              0.5*((2*p1[1])+(-p0[1]+p2[1])*t+(2*p0[1]-5*p1[1]+4*p2[1]-p3[1])*t2+(-p0[1]+3*p1[1]-3*p2[1]+p3[1])*t3)]);}
}
pts.push(P[P.length-1]);
var cv=document.getElementById('cie');var ctx=cv.getContext('2d');
var img=ctx.createImageData(W,H);var D=img.data;
var GAM=window.CIEGAM||1.0, DK=window.CIEDK||0.61;
function rgbOf(u,v,out){
  var d=6*u-16*v+12;var x=9*u/d,y=4*v/d;
  var XX=x/y,ZZ=(1-x-y)/y;
  var r=3.2406*XX-1.5372-0.4986*ZZ, g=-0.9689*XX+1.8758+0.0415*ZZ, b=0.0557*XX-0.2040+1.0570*ZZ;
  out[0]=r;out[1]=g;out[2]=b;
}
var TR=window.CIEXY?[[0.64,0.33],[0.30,0.60],[0.15,0.06]]:[[0.4507,0.5229],[0.1250,0.5625],[0.1754,0.1579]];var XYP=!!window.CIEXY;
function projSeg(pu,pv,a,b,res){
  var dx=b[0]-a[0],dy=b[1]-a[1];var t=((pu-a[0])*dx+(pv-a[1])*dy)/(dx*dx+dy*dy);
  if(t<0)t=0;if(t>1)t=1;var qu=a[0]+t*dx,qv=a[1]+t*dy;var dd=(pu-qu)*(pu-qu)+(pv-qv)*(pv-qv);
  if(dd<res[2]){res[0]=qu;res[1]=qv;res[2]=dd;}
}
var c=[0,0,0],res=[0,0,0];
for(var j=0;j<H;j++){for(var i=0;i<W;i++){
  var u=(OX+i+0.5-1017.4)/1065.8,v=(612.1-(OY+j+0.5))/818.2;
  if(v<0.002)v=0.002;
  rgbOf(u,v,c);
  var k=1;
  var belowBR = window.CIEHY && ((0.4507-0.1754)*(v-0.1579)-(0.5229-0.1579)*(u-0.1754) < 0);
  if(belowBR && (c[0]<0||c[1]<0||c[2]<0)){ k=DK; }
  else if(c[0]<0||c[1]<0||c[2]<0){
    var pu=u,pv=v;
    if(XYP){var dd=6*u-16*v+12;pu=9*u/dd;pv=4*v/dd;}
    res[2]=1e9;projSeg(pu,pv,TR[0],TR[1],res);projSeg(pu,pv,TR[1],TR[2],res);projSeg(pu,pv,TR[2],TR[0],res);
    if(XYP){var qx=res[0],qy=res[1],de=-2*qx+12*qy+3;rgbOf(4*qx/de,9*qy/de,c);}else{rgbOf(res[0],res[1],c);}
    k=DK;
  }
  var r=Math.max(c[0],0),g=Math.max(c[1],0),b=Math.max(c[2],0);
  var m=Math.max(r,g,b);r/=m;g/=m;b/=m;
  if(GAM!=1){r=Math.pow(r,GAM);g=Math.pow(g,GAM);b=Math.pow(b,GAM);}
  var o=(j*W+i)*4;D[o]=r*255*k;D[o+1]=g*255*k;D[o+2]=b*255*k;D[o+3]=255;
}}
var off=document.createElement('canvas');off.width=W;off.height=H;off.getContext('2d').putImageData(img,0,0);
ctx.save();ctx.beginPath();ctx.moveTo(pts[0][0],pts[0][1]);
for(var i=1;i<pts.length;i++)ctx.lineTo(pts[i][0],pts[i][1]);
ctx.closePath();ctx.clip();ctx.drawImage(off,0,0);ctx.restore();
})();
</script>
</body></html>
